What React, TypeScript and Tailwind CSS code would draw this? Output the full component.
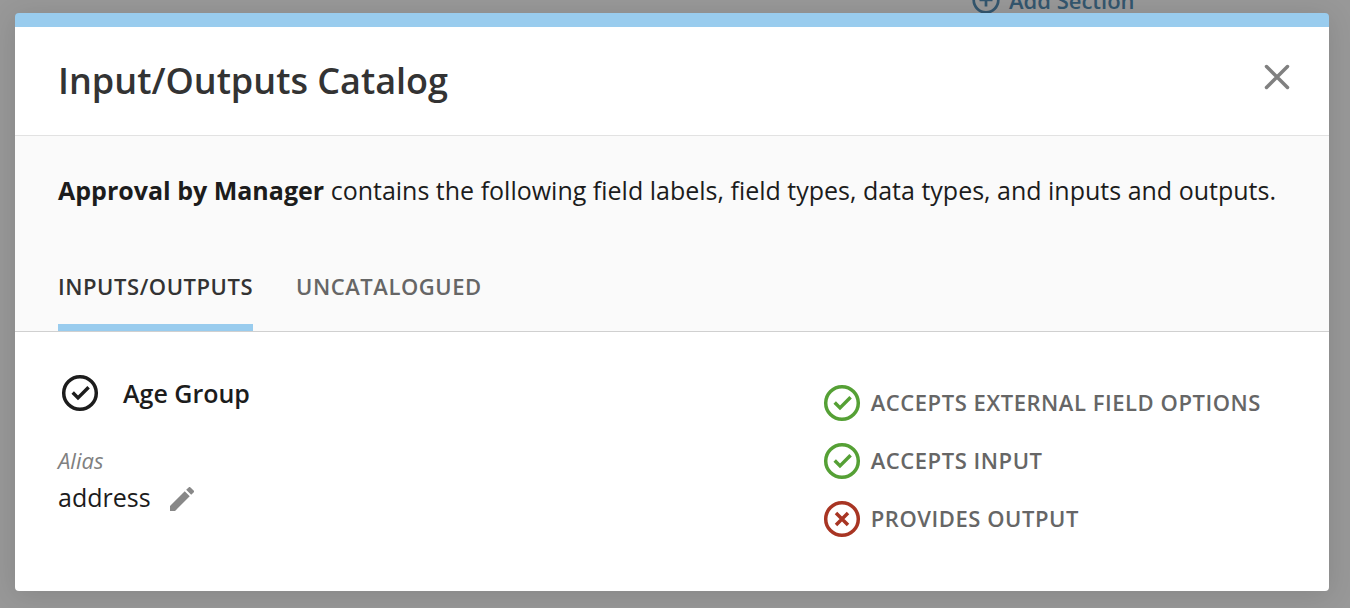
import React from 'react';

function StatusIcon({ ok }: { ok: boolean }) {
  return (
    <svg viewBox="0 0 38 38" className="size-[38px] shrink-0" fill="none" stroke="currentColor" strokeWidth="3.5" aria-hidden="true">
      <circle cx="19" cy="19" r="16.3" />
      {ok ? <path d="M11.7 18.6l5.3 5.3 10.6-10.6" /> : <path d="M13 13l12 12M25 13L13 25" />}
    </svg>
  );
}

const capabilities = [
  { label: 'Accepts External Field Options', ok: true },
  { label: 'Accepts Input', ok: true },
  { label: 'Provides Output', ok: false },
];

export default function App() {
  return (
    <div className="relative min-h-screen overflow-hidden bg-[#989898] pt-[13px] pr-[21px] pb-[17px] pl-[15px] font-['Open_Sans',sans-serif] text-[#1c1c1c]">
      <button className="absolute -top-3.5 left-[972px] flex items-center gap-[9px] text-[22px] leading-7 font-semibold text-[#33566e]">
        <svg viewBox="0 0 28 28" className="size-7" fill="none" stroke="currentColor" strokeWidth="2.7" aria-hidden="true">
          <circle cx="14" cy="14" r="12.3" />
          <path d="M14 7.5v13M7.5 14h13" />
        </svg>
        Add Section
      </button>
      <section role="dialog" aria-labelledby="title" className="relative overflow-hidden rounded-[4px] border-t-14 border-[#99ccee] bg-white shadow-[0_4px_28px_rgba(0,0,0,0.12)]">
        <header className="flex items-center justify-between border-b border-[#e2e2e2] pt-7 pr-9 pb-7 pl-[43px]">
          <h1 id="title" className="text-[36px] leading-[52px] font-semibold text-[#333]">Input/Outputs Catalog</h1>
          <button aria-label="Close" className="-mt-2 text-[#808080]">
            <svg viewBox="0 0 32 32" className="size-8" aria-hidden="true">
              <path d="M5.5 5.5l21 21M26.5 5.5l-21 21" stroke="currentColor" strokeWidth="3.5" strokeLinecap="round" />
            </svg>
          </button>
        </header>
        <div className="border-b border-[#d0d0d0] bg-[#fafafa] px-[43px] pt-[34px]">
          <p className="text-[25px] leading-10 whitespace-nowrap">
            <strong className="font-bold">Approval by Manager</strong> contains the following field labels, field types, data types, and inputs and outputs.
          </p>
          <div role="tablist" className="mt-[51px] flex gap-[43px] text-[22px] leading-[50px] font-semibold tracking-wide text-[#333] uppercase">
            <button role="tab" aria-selected="true" className="border-b-7 border-[#99ccee] pb-[13px] uppercase">Inputs/Outputs</button>
            <button role="tab" aria-selected="false" className="border-b-7 border-transparent pb-[13px] text-[#666] uppercase">Uncatalogued</button>
          </div>
        </div>
        <div className="flex justify-between pt-[41px] pr-[68px] pb-[53px] pl-[43px]">
          <div>
            <h2 className="flex items-center gap-6 pl-[3px] text-[25px] leading-10 font-semibold">
              <StatusIcon ok />
              Age Group
            </h2>
            <p className="mt-[35px] text-[22px] leading-6 text-[#808080] italic">Alias</p>
            <div className="mt-[5px] flex items-center gap-[19px] text-[25px] leading-10">
              address
              <button aria-label="Edit alias" className="pt-[3px] text-[#888]">
                <svg viewBox="3 3 18 18" className="size-6" fill="currentColor" aria-hidden="true">
                  <path d="M3 17.25V21h3.75L17.81 9.94l-3.75-3.75L3 17.25zM20.71 7.04a1 1 0 0 0 0-1.41l-2.34-2.34a1 1 0 0 0-1.41 0l-1.83 1.83 3.75 3.75 1.83-1.83z" />
                </svg>
              </button>
            </div>
          </div>
          <ul className="flex flex-col gap-5 pt-[11px] text-[22px] leading-[36px] font-semibold tracking-wide text-[#666] uppercase">
            {capabilities.map(({ label, ok }) => (
              <li key={label} className="flex h-[38px] items-start gap-[10px]">
                <span className={ok ? 'text-[#55a035]' : 'text-[#a83523]'}><StatusIcon ok={ok} /></span>
                {label}
              </li>
            ))}
          </ul>
        </div>
      </section>
    </div>
  );
}
